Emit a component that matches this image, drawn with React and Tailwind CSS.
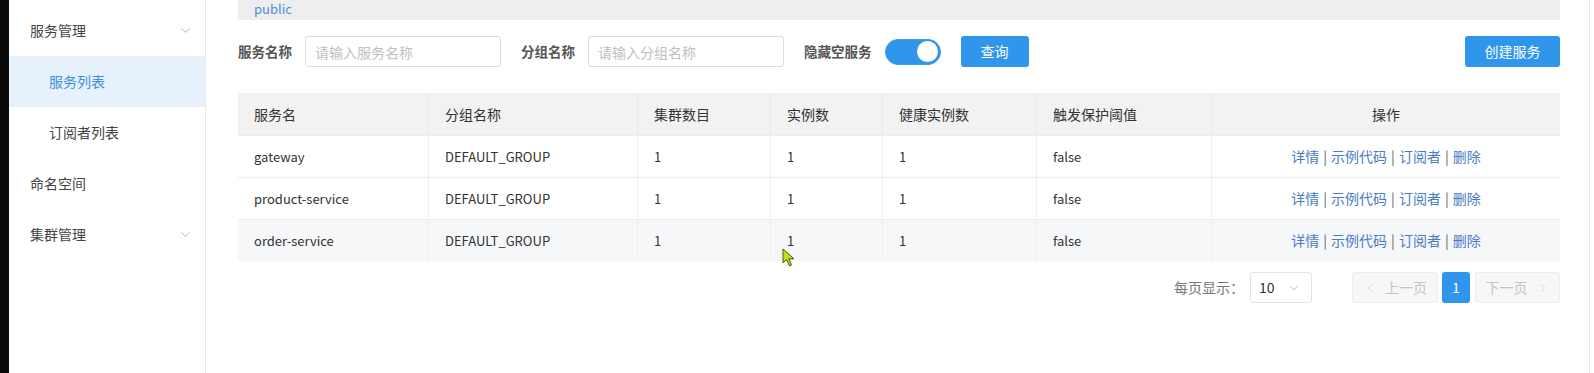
import { ChevronDown, ChevronLeft, ChevronRight } from 'lucide-react';

const FONT = { fontFamily: '"Noto Sans CJK SC", "Liberation Sans", sans-serif' };

const MENU = [
  { label: '服务管理', arrow: true },
  { label: '服务列表', sub: true, active: true },
  { label: '订阅者列表', sub: true },
  { label: '命名空间' },
  { label: '集群管理', arrow: true },
];

const COLS = [
  { title: '服务名', w: 'w-[190px]' },
  { title: '分组名称', w: 'w-[209px]' },
  { title: '集群数目', w: 'w-[133px]' },
  { title: '实例数', w: 'w-[112px]' },
  { title: '健康实例数', w: 'w-[154px]' },
  { title: '触发保护阈值', w: 'w-[175px]' },
];

const ROWS = [
  ['gateway', 'DEFAULT_GROUP', '1', '1', '1', 'false'],
  ['product-service', 'DEFAULT_GROUP', '1', '1', '1', 'false'],
  ['order-service', 'DEFAULT_GROUP', '1', '1', '1', 'false'],
];

function Sidebar() {
  return (
    <aside className="w-[197px] shrink-0 border-r border-[#e8e8e8] bg-white pt-[5px]">
      {MENU.map((m) => (
        <div
          key={m.label}
          className={`flex h-[51px] items-center justify-between pr-[12px] text-[14px] ${
            m.sub ? 'pl-[40px]' : 'pl-[21px]'
          } ${m.active ? 'bg-[#e6f1fc] text-[#3f8fe0]' : 'text-[#444]'}`}
        >
          <span>{m.label}</span>
          {m.arrow && <ChevronDown size={15} strokeWidth={1.2} className="text-[#999]" />}
        </div>
      ))}
    </aside>
  );
}

function Field({ label, placeholder }) {
  return (
    <div className="flex items-center gap-[13px]">
      <span className="text-[13.5px] font-bold text-[#555]">{label}</span>
      <input
        placeholder={placeholder}
        className="h-[31px] w-[196px] rounded-[3px] border border-[#dcdcdc] pl-[9px] text-[14px] outline-none placeholder:text-[#c0c0c0]"
      />
    </div>
  );
}

function Toolbar() {
  return (
    <div className="mt-[16px] flex h-[31px] w-[1322px] items-center">
      <Field label="服务名称" placeholder="请输入服务名称" />
      <div className="ml-[20px]">
        <Field label="分组名称" placeholder="请输入分组名称" />
      </div>
      <span className="ml-[20px] text-[13.5px] font-bold text-[#555]">隐藏空服务</span>
      <div className="ml-[13px] flex h-[26px] w-[56px] items-center justify-end rounded-full border border-[#3a9bec] bg-[#2f96eb] pr-[2px]">
        <div className="h-[21px] w-[21px] rounded-full bg-white" />
      </div>
      <button className="ml-[20px] h-[31px] w-[68px] rounded-[3px] bg-[#2f96eb] text-[14px] text-white">查询</button>
      <button className="ml-auto h-[31px] w-[95px] rounded-[3px] bg-[#2f96eb] text-[14px] text-white">创建服务</button>
    </div>
  );
}

function Actions() {
  const items = ['详情', '示例代码', '订阅者', '删除'];
  return (
    <span className="text-[14px] text-[#4a7cc4]">
      {items.map((t, i) => (
        <span key={t}>
          {i > 0 && <span className="px-[4px] text-[#666]">|</span>}
          {t}
        </span>
      ))}
    </span>
  );
}

function ServiceTable() {
  return (
    <div className="mt-[26px] w-[1322px] text-[14px] text-[#333]">
      <div className="flex h-[42px] items-center bg-[#f2f2f2]">
        {COLS.map((c, i) => (
          <div key={c.title} className={`${c.w} flex h-full items-center px-4 ${i > 0 ? 'border-l border-[#e9e9e9]' : ''}`}>
            {c.title}
          </div>
        ))}
        <div className="flex h-full flex-1 items-center justify-center border-l border-[#e9e9e9]">操作</div>
      </div>
      {ROWS.map((r, ri) => (
        <div
          key={r[0]}
          className={`flex h-[42px] items-center border-t border-[#ececec] ${ri === 2 ? 'bg-[#f6f7f9]' : 'bg-white'}`}
        >
          {r.map((v, i) => (
            <div
              key={i}
              className={`${COLS[i].w} flex h-full items-center px-4 text-[13px] ${i > 0 ? 'border-l border-[#f0f0f0]' : ''}`}
            >
              {v}
            </div>
          ))}
          <div className="flex h-full flex-1 items-center justify-center border-l border-[#f0f0f0]">
            <Actions />
          </div>
        </div>
      ))}
    </div>
  );
}

function Pager() {
  return (
    <div className="mt-[11px] flex w-[1322px] items-center justify-end text-[14px]">
      <span className="text-[#777]">每页显示：</span>
      <div className="ml-[6px] flex h-[31px] w-[62px] items-center justify-between rounded-[3px] border border-[#e3e3e3] pl-[8px] pr-[10px] text-[#333]">
        <span>10</span>
        <ChevronDown size={14} strokeWidth={1.2} className="text-[#999]" />
      </div>
      <div className="ml-[40px] flex h-[31px] w-[86px] items-center justify-center gap-[8px] rounded-[3px] border border-[#ececec] bg-[#f7f7f7] text-[#c4c4c4]">
        <ChevronLeft size={14} strokeWidth={1.2} />
        <span>上一页</span>
      </div>
      <div className="ml-[4px] flex h-[31px] w-[28px] items-center justify-center rounded-[3px] bg-[#2f96eb] text-white">1</div>
      <div className="ml-[5px] flex h-[31px] w-[85px] items-center justify-center gap-[8px] rounded-[3px] border border-[#ececec] bg-[#f7f7f7] text-[#c4c4c4]">
        <span>下一页</span>
        <ChevronRight size={14} strokeWidth={1.2} />
      </div>
    </div>
  );
}

function Cursor() {
  return (
    <svg className="absolute left-[782px] top-[248px]" width="14" height="20" viewBox="0 0 14 20">
      <path d="M1 1 L1 15 L4.5 11.5 L7.5 18 L9.5 17 L6.8 10.8 L12 10.8 Z" fill="#c6df1c" stroke="#4a5a10" strokeWidth="1" strokeLinejoin="round" />
    </svg>
  );
}

export default function App() {
  return (
    <div className="relative flex h-[373px] w-[1594px] overflow-hidden bg-white" style={FONT}>
      <div className="w-[9px] shrink-0 bg-[#0a0a0a]" />
      <Sidebar />
      <main className="flex-1 pl-[32px]">
        <div className="h-[20px] w-[1322px] bg-[#eeeeee] pl-[16px] text-[13px] leading-[17px] text-[#4a8fdb]">public</div>
        <Toolbar />
        <ServiceTable />
        <Pager />
      </main>
      <div className="w-[5px] shrink-0 border-l border-[#e6e6e6]" />
      <Cursor />
    </div>
  );
}
